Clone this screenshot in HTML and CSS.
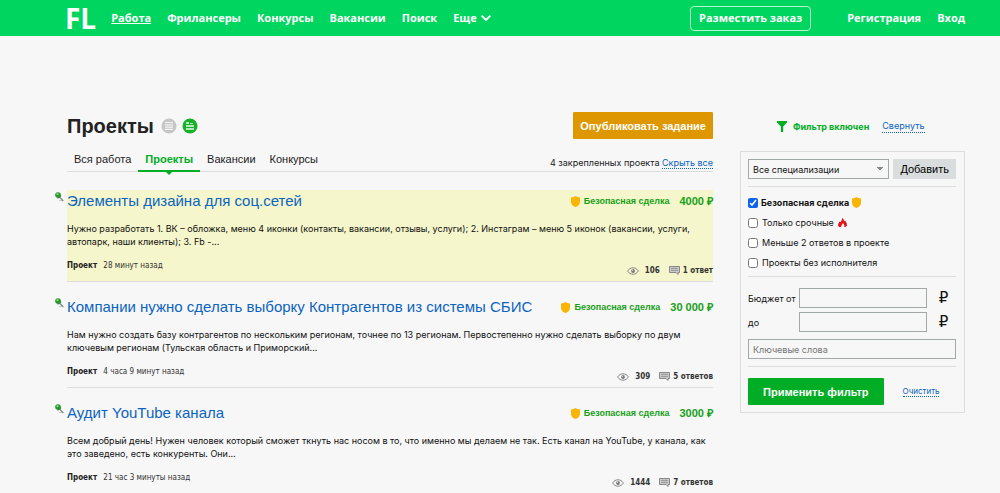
FILE: index.html
```html
<!DOCTYPE html>
<html lang="ru">
<head>
<meta charset="utf-8">
<title>Проекты — FL</title>
<link rel="stylesheet" href="styles.css">
</head>
<body>
<svg class="sprite" aria-hidden="true">
  <symbol id="shield" viewBox="0 0 9 11"><path fill="#fbb400" d="M4.5 0C5.6.9 7 1.4 9 1.5v4.2C9 8.300 7.200 10 4.500 11 1.800 10 0 8.300 0 5.700V1.500C2 1.400 3.400.9 4.500 0z"/></symbol>
  <symbol id="eye" viewBox="0 0 12 8"><path fill="none" stroke="#888" d="M.6 4C3.200-.3 8.800-.3 11.400 4 8.800 8.300 3.200 8.300.6 4z"/><circle cx="6" cy="4" r="1.900" fill="#777"/><circle cx="5.500" cy="3.300" r=".7" fill="#ddd"/></symbol>
  <symbol id="comment" viewBox="0 0 11 9"><path fill="#ccc" stroke="#888" d="M.5.5h10v6H9v2l-2-2H.5z"/><path stroke="#888" stroke-width=".8" d="M2 2.400h7M2 4.400h7"/></symbol>
  <symbol id="pin" viewBox="0 0 9 10"><path stroke="#c5cdca" d="M4 8.500h4"/><path stroke="#7c8b87" stroke-width="1.200" d="M4.500 5L8.300 9"/><path stroke="#3c6f45" stroke-width="1.400" d="M2.500 6.300L6 3.500"/><circle cx="3" cy="3" r="2.800" fill="#24962b"/><circle cx="2.500" cy="2.200" r="1.100" fill="#8bdc7b"/></symbol>
</svg>

<header class="topbar">
  <a class="logo" href="#">FL</a>
  <nav class="nav">
    <a class="current" href="#">Работа</a>
    <a href="#">Фрилансеры</a>
    <a href="#">Конкурсы</a>
    <a href="#">Вакансии</a>
    <a href="#">Поиск</a>
    <a class="more" href="#">Еще <svg width="10" height="6" viewBox="0 0 10 6"><path fill="none" stroke="#fff" stroke-width="1.800" d="M.6.6L5 5 9.400.6"/></svg></a>
  </nav>
  <button class="order" type="button">Разместить заказ</button>
  <nav class="account">
    <a href="#">Регистрация</a>
    <a href="#">Вход</a>
  </nav>
</header>

<div class="page">
  <main class="content">
    <div class="heading">
      <h1>Проекты</h1>
      <svg width="16" height="16" viewBox="0 0 16 16"><circle cx="8" cy="8" r="7.500" fill="#c6c6c6"/><path stroke="#f4f4f4" stroke-width="1.200" d="M4 4.500h8M4 6.800h8M4 9.100h8M4 11.400h8"/></svg>
      <svg width="16" height="16" viewBox="0 0 16 16"><circle cx="8" cy="8" r="7.500" fill="#16b02a"/><path fill="#b4e9b9" d="M4 4h3v2H4zM4 7h8v2H4zM4 10h8v2H4z"/><path stroke="#b4e9b9" d="M8 5.500h3"/></svg>
      <button class="publish" type="button">Опубликовать задание</button>
    </div>
    <div class="tabbar">
      <nav class="tabs">
        <a href="#">Вся работа</a>
        <a class="active" href="#">Проекты</a>
        <a href="#">Вакансии</a>
        <a href="#">Конкурсы</a>
      </nav>
      <p class="pinned">4 закрепленных проекта <a class="dotted" href="#">Скрыть все</a></p>
    </div>

    <article class="card marked">
      <svg class="pin" width="9" height="10"><use href="#pin"/></svg>
      <div class="card-head">
        <h2><a href="#">Элементы дизайна для соц.сетей</a></h2>
        <span class="safe"><svg width="9" height="11"><use href="#shield"/></svg>Безопасная сделка</span>
        <span class="price">4000 ₽</span>
      </div>
      <p class="text">Нужно разработать 1. ВК – обложка, меню 4 иконки (контакты, вакансии, отзывы, услуги); 2. Инстаграм – меню 5 иконок (вакансии, услуги, автопарк, наши клиенты); 3. Fb -...</p>
      <div class="meta">
        <p class="kind"><b>Проект</b> 28 минут назад</p>
        <p class="stats"><svg width="12" height="8"><use href="#eye"/></svg><span>106</span><svg width="11" height="9"><use href="#comment"/></svg><a href="#">1 ответ</a></p>
      </div>
    </article>

    <article class="card">
      <svg class="pin" width="9" height="10"><use href="#pin"/></svg>
      <div class="card-head">
        <h2><a href="#">Компании нужно сделать выборку Контрагентов из системы СБИС</a></h2>
        <span class="safe"><svg width="9" height="11"><use href="#shield"/></svg>Безопасная сделка</span>
        <span class="price">30 000 ₽</span>
      </div>
      <p class="text">Нам нужно создать базу контрагентов по нескольким регионам, точнее по 13 регионам. Первостепенно нужно сделать выборку по двум ключевым регионам (Тульская область и Приморский...</p>
      <div class="meta">
        <p class="kind"><b>Проект</b> 4 часа 9 минут назад</p>
        <p class="stats"><svg width="12" height="8"><use href="#eye"/></svg><span>309</span><svg width="11" height="9"><use href="#comment"/></svg><a href="#">5 ответов</a></p>
      </div>
    </article>

    <article class="card">
      <svg class="pin" width="9" height="10"><use href="#pin"/></svg>
      <div class="card-head">
        <h2><a href="#">Аудит YouTube канала</a></h2>
        <span class="safe"><svg width="9" height="11"><use href="#shield"/></svg>Безопасная сделка</span>
        <span class="price">3000 ₽</span>
      </div>
      <p class="text">Всем добрый день! Нужен человек который сможет ткнуть нас носом в то, что именно мы делаем не так. Есть канал на YouTube, у канала, как это заведено, есть конкуренты. Они...</p>
      <div class="meta">
        <p class="kind"><b>Проект</b> 21 час 3 минуты назад</p>
        <p class="stats"><svg width="12" height="8"><use href="#eye"/></svg><span>1444</span><svg width="11" height="9"><use href="#comment"/></svg><a href="#">7 ответов</a></p>
      </div>
    </article>
  </main>

  <aside class="sidebar">
    <div class="filter-head">
      <svg width="10" height="11" viewBox="0 0 10 11"><path fill="#00ae26" d="M0 0h10v1.500L6.200 5.500V11H3.900V5.500L0 1.500z"/></svg>
      <strong>Фильтр включен</strong>
      <a class="dotted" href="#">Свернуть</a>
    </div>
    <form class="filter">
      <div class="spec">
        <select aria-label="Специализация"><option>Все специализации</option></select>
        <button class="add" type="button">Добавить</button>
      </div>
      <div class="checks">
        <label class="bold"><input type="checkbox" checked>Безопасная сделка<svg width="9" height="11"><use href="#shield"/></svg></label>
        <label><input type="checkbox">Только срочные<svg width="9" height="9" viewBox="0 0 9 9"><path fill="#e4141c" d="M4 0c2 1 2 2.500 2 3.500l1-1c1.500 1.500 2 3.500 2 5L7.500 9H6.200c.6-1.500 0-2.700-1.500-4C4.500 6.500 3.300 7.300 3 9H1L0 7.500C0 5.500 1 5 1.500 3.200l.9 1C3.500 3 4.200 1.500 4 0z"/></svg></label>
        <label><input type="checkbox">Меньше 2 ответов в проекте</label>
        <label><input type="checkbox">Проекты без исполнителя</label>
      </div>
      <div class="budget">
        <label for="from">Бюджет от</label><input id="from" type="text"><span>₽</span>
        <label for="to">до</label><input id="to" type="text"><span>₽</span>
      </div>
      <input class="keys" type="text" placeholder="Ключевые слова" aria-label="Ключевые слова">
      <div class="actions">
        <button class="apply" type="submit">Применить фильтр</button>
        <a class="dotted" href="#">Очистить</a>
      </div>
    </form>
  </aside>
</div>
</body>
</html>
```
FILE: styles.css
```css
* { box-sizing: border-box; }

body {
  margin: 0;
  background: #f7f7f7;
  color: #111;
  font: 9px/13px Inter, "Liberation Sans", sans-serif;
  overflow: hidden;
}

h1, h2, p { margin: 0; }
a { color: #0b64c0; text-decoration: none; }
button { border: 0; cursor: pointer; white-space: nowrap; }
svg { flex: none; }
.sprite { position: absolute; width: 0; height: 0; }
.dotted { border-bottom: 1px dotted #0b64c0; }

.topbar {
  display: flex;
  align-items: center;
  height: 36px;
  padding: 0 35px 0 65px;
  background: #00d55f;
  font: bold 11px/14px "Open Sans", "Noto Sans", sans-serif;
}
.topbar a { color: #fff; }
.logo { margin-right: 15px; font-size: 28px; line-height: 36px; }
.nav, .account { display: flex; gap: 16px; }
.nav .current { text-decoration: underline; }
.more { display: flex; align-items: center; gap: 4px; }
.order {
  height: 25px;
  margin-left: auto;
  padding: 0 8px;
  border: 1px solid #b5f3d0;
  border-radius: 4px;
  background: none;
  color: #fff;
  font: inherit;
}
.account { margin-left: 36px; }

.page {
  display: flex;
  gap: 27px;
  padding: 76px 35px 0 67px;
}
.content { flex: 1; min-width: 0; }

.heading,
.tabs,
.card-head,
.add,
.apply { font-family: "Liberation Sans", Arial, sans-serif; }

.heading { display: flex; align-items: center; gap: 5px; height: 27px; }
.heading h1 { margin-right: 2px; color: #222; font-size: 20px; line-height: 26px; }
.publish,
.apply {
  height: 27px;
  border-radius: 1px;
  color: #fff;
  font-family: inherit;
  font-size: 11px;
  font-weight: bold;
}
.publish { margin-left: auto; padding: 0 7px; background: #df9700; }

.tabbar {
  display: flex;
  justify-content: space-between;
  height: 33px;
  margin-bottom: 18px;
  border-bottom: 1px solid #ddd;
}
.tabs { display: flex; font-size: 11px; line-height: 14px; }
.tabs a { height: 33px; padding: 13px 7px 0; color: #222; }
.tabs .active {
  position: relative;
  border-bottom: 2px solid #00ad25;
  color: #00ad25;
  font-weight: bold;
}
.tabs .active::after {
  content: "";
  position: absolute;
  top: 100%;
  left: 50%;
  border: 5px solid transparent;
  border-top-color: #00ad25;
  border-bottom: 0;
  transform: translateX(-50%);
}
.pinned { padding-top: 17px; color: #222; }

.card {
  position: relative;
  margin-bottom: 14px;
  padding-top: 2px;
  border-bottom: 1px solid #ddd;
}
.marked { background: #f5f6cb; }
.pin { position: absolute; top: 2px; left: -12px; }
.card-head { display: flex; align-items: center; height: 18px; }
.card-head h2 { flex: 1; font-size: 15px; line-height: 18px; font-weight: normal; }
.safe, .price { color: #18a018; font-weight: bold; }
.safe { display: flex; align-items: center; gap: 4px; }
.price { margin-left: 10px; font-size: 11px; }
.text { margin-top: 12px; }
.meta {
  display: flex;
  justify-content: space-between;
  margin-top: 11px;
  height: 22px;
  color: #333;
  font: 8px/13px "DejaVu Sans Condensed", "DejaVu Sans", sans-serif;
}
.kind b { margin-right: 4px; color: #222; }
.stats {
  display: flex;
  align-items: center;
  height: 13px;
  margin-top: 5px;
  font-weight: bold;
}
.stats span { margin: 0 9px 0 6px; }
.stats a { margin-left: 3px; color: #333; }

.sidebar { width: 225px; }
.filter-head {
  display: flex;
  align-items: center;
  height: 28px;
  padding-left: 37px;
}
.filter-head strong { margin: 0 13px 0 6px; color: #00ad25; }
.filter {
  margin-top: 11px;
  padding: 7px 8px 7px 7px;
  border: 1px solid #ddd;
}
.filter input[type="text"] {
  min-width: 0;
  height: 20px;
  padding: 0 4px;
  border: 1px solid #a3a8a8;
  background: #f7f7f7;
  font: inherit;
}
.spec { display: flex; gap: 4px; padding-bottom: 7px; border-bottom: 1px solid #ddd; }
.spec select {
  flex: 1;
  min-width: 0;
  height: 20px;
  padding: 0 4px;
  border: 1px solid #a3a8a8;
  border-radius: 0;
  appearance: none;
  background: conic-gradient(from -40deg at 50% 100%, #888 80deg, transparent 0) right 5px center / 6px 4px no-repeat;
  color: #111;
  font: inherit;
}
.add { height: 20px; padding: 0 7px; background: #dadddd; font-size: 11px; }
.checks {
  display: grid;
  gap: 7px;
  padding: 9px 0 7px;
  border-bottom: 1px solid #ddd;
}
.checks label { display: flex; align-items: center; gap: 4px; height: 13px; }
.checks .bold { gap: 3px; font-weight: bold; }
.checks input { width: 10px; height: 10px; margin: 0; accent-color: #0b63ee; }
.budget {
  display: grid;
  grid-template-columns: 47px 1fr 25px;
  gap: 4px;
  align-items: center;
  padding-top: 11px;
}
.budget label { white-space: nowrap; }
.budget span { font: 15px/20px "DejaVu Sans", sans-serif; text-align: center; }
.filter .keys { display: block; width: 100%; margin: 7px 0; }
.filter .keys::placeholder { color: #757575; }
.actions {
  display: flex;
  align-items: center;
  gap: 19px;
  padding-top: 11px;
  border-top: 1px solid #ddd;
}
.apply {
  padding: 0 15px;
  background: #00ad25;
  font-family: "Liberation Sans", Arial, sans-serif;
}
.actions a { font-size: 8px; line-height: 9px; }
```
